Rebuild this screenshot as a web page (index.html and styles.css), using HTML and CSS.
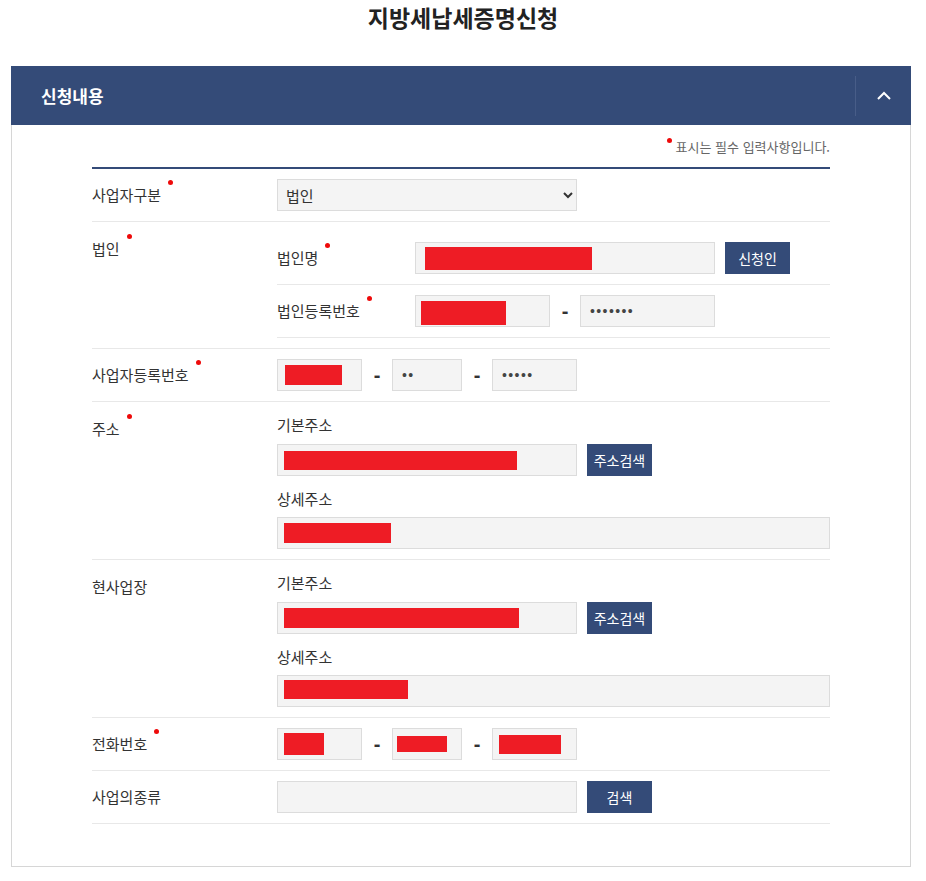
FILE: index.html
```html
<!DOCTYPE html>
<html lang="ko">
<head>
<meta charset="utf-8">
<title>지방세납세증명신청</title>
<link rel="stylesheet" href="styles.css">
</head>
<body>
<h1 class="page-title">지방세납세증명신청</h1>
<section class="panel">
  <div class="panel-head">
    <h2 class="panel-title">신청내용</h2>
    <button class="panel-toggle" type="button" aria-label="접기">
      <svg width="14" height="9" viewBox="0 0 14 9"><polyline points="1,8 7,2 13,8" fill="none" stroke="#fff" stroke-width="2"/></svg>
    </button>
  </div>
  <div class="panel-body">
    <p class="req-note"><span class="note-dot"></span>표시는 필수 입력사항입니다.</p>
    <div class="form">
      <div class="row">
        <div class="th">사업자구분<span class="req"></span></div>
        <div class="td">
          <select class="select"><option>법인</option></select>
        </div>
      </div>

      <div class="row row-multi">
        <div class="th">법인<span class="req"></span></div>
        <div class="td td-block">
          <div class="subrow">
            <div class="sub-th">법인명<span class="req"></span></div>
            <div class="field w300"><span class="mask m-corp-name"></span></div>
            <button class="btn" type="button">신청인</button>
          </div>
          <div class="subrow">
            <div class="sub-th">법인등록번호<span class="req"></span></div>
            <div class="field w135"><span class="mask m-corp-no"></span></div>
            <span class="dash">-</span>
            <div class="field w135"><span class="dots">•••••••</span></div>
          </div>
        </div>
      </div>

      <div class="row">
        <div class="th">사업자등록번호<span class="req"></span></div>
        <div class="td">
          <div class="field w85"><span class="mask m-biz"></span></div>
          <span class="dash">-</span>
          <div class="field w70"><span class="dots">••</span></div>
          <span class="dash">-</span>
          <div class="field w85"><span class="dots">•••••</span></div>
        </div>
      </div>

      <div class="row row-multi">
        <div class="th">주소<span class="req"></span></div>
        <div class="td td-block">
          <div class="addr-label">기본주소</div>
          <div class="field-group">
            <div class="field w300"><span class="mask m-addr1"></span></div>
            <button class="btn" type="button">주소검색</button>
          </div>
          <div class="addr-label addr-label-2">상세주소</div>
          <div class="field wfull"><span class="mask m-addr1-detail"></span></div>
        </div>
      </div>

      <div class="row row-multi">
        <div class="th">현사업장</div>
        <div class="td td-block">
          <div class="addr-label">기본주소</div>
          <div class="field-group">
            <div class="field w300"><span class="mask m-addr2"></span></div>
            <button class="btn" type="button">주소검색</button>
          </div>
          <div class="addr-label addr-label-2">상세주소</div>
          <div class="field wfull"><span class="mask m-addr2-detail"></span></div>
        </div>
      </div>

      <div class="row">
        <div class="th">전화번호<span class="req"></span></div>
        <div class="td">
          <div class="field w85"><span class="mask m-tel1"></span></div>
          <span class="dash">-</span>
          <div class="field w70"><span class="mask m-tel2"></span></div>
          <span class="dash">-</span>
          <div class="field w85"><span class="mask m-tel3"></span></div>
        </div>
      </div>

      <div class="row">
        <div class="th">사업의종류</div>
        <div class="td">
          <div class="field w300"></div>
          <button class="btn" type="button">검색</button>
        </div>
      </div>
    </div>
  </div>
</section>
</body>
</html>
```

FILE: styles.css
```css
* { box-sizing: border-box; }

body {
  margin: 0;
  background: #fff;
  font-family: "Noto Sans CJK KR", "Noto Sans", sans-serif;
  font-size: 15px;
  line-height: 20px;
  color: #333;
}

.page-title {
  margin: 0;
  text-align: center;
  font-size: 23px;
  font-weight: 700;
  line-height: 35px;
  color: #222;
}

.panel {
  margin: 31px 0 0 11px;
  width: 900px;
}

.panel-head {
  height: 59px;
  background: #344b78;
  display: flex;
  align-items: center;
  justify-content: space-between;
  padding-left: 30px;
}

.panel-title {
  margin: 0;
  font-size: 17px;
  font-weight: 700;
  color: #fff;
  line-height: 24px;
}

.panel-toggle {
  width: 56px;
  height: 40px;
  border: 0;
  border-left: 1px solid #485d88;
  background: transparent;
  padding: 0;
  display: flex;
  align-items: center;
  justify-content: center;
}

.panel-body {
  border: 1px solid #d6d6d6;
  border-top: 0;
  padding: 13px 80px 42px 80px;
}

.req-note {
  margin: 0 0 11px;
  text-align: right;
  font-size: 13px;
  line-height: 18px;
  color: #666;
}

.note-dot {
  display: inline-block;
  width: 5px;
  height: 5px;
  border-radius: 50%;
  background: #ee0a0a;
  vertical-align: top;
  margin: 0 4px 0 0;
}

.req {
  display: inline-block;
  width: 5px;
  height: 5px;
  border-radius: 50%;
  background: #ee0a0a;
  vertical-align: top;
  margin: -5px 0 0 7px;
}

.form {
  border-top: 2px solid #344b78;
}

.row {
  display: flex;
  align-items: center;
  padding: 10px 0;
  border-bottom: 1px solid #e8e8e8;
}

.row-multi {
  align-items: flex-start;
}

.th {
  width: 185px;
  flex: none;
  color: #333;
}

.row-multi > .th {
  padding-top: 7px;
}

.td {
  flex: 1;
  display: flex;
  align-items: center;
}

.td-block {
  display: block;
}

.subrow {
  display: flex;
  align-items: center;
  padding: 10px 0;
  border-bottom: 1px solid #e8e8e8;
}

.sub-th {
  width: 138px;
  flex: none;
}

.select {
  width: 300px;
  height: 32px;
  background: #f4f4f4;
  border: 1px solid #dcdcdc;
  border-radius: 0;
  font-family: "Noto Sans CJK KR", sans-serif;
  font-size: 15px;
  color: #333;
  padding: 0 4px;
}

.field {
  height: 32px;
  background: #f4f4f4;
  border: 1px solid #dcdcdc;
  display: flex;
  align-items: center;
  padding: 0 6px;
  flex: none;
}

.w300 { width: 300px; }
.w135 { width: 135px; }
.w85 { width: 85px; }
.w70 { width: 70px; }
.wfull { width: 100%; }

.field-group {
  display: flex;
  align-items: center;
}

.addr-label {
  padding-top: 3px;
  margin-bottom: 9px;
  line-height: 20px;
}

.addr-label-2 {
  padding-top: 0;
  margin-top: 13px;
  margin-bottom: 8px;
}

.btn {
  width: 65px;
  height: 32px;
  margin-left: 10px;
  border: 0;
  background: #344b78;
  color: #fff;
  font-family: "Noto Sans CJK KR", sans-serif;
  font-size: 14px;
  padding: 0;
  flex: none;
}

.dash {
  width: 30px;
  text-align: center;
  font-family: "Liberation Sans", sans-serif;
  font-weight: 700;
  font-size: 20px;
  color: #333;
  flex: none;
}

.dots {
  font-family: "Liberation Sans", sans-serif;
  font-size: 14px;
  letter-spacing: 1.4px;
  color: #444;
  margin-left: 3px;
}

.mask {
  display: block;
  background: #ee1c25;
  flex: none;
}

.m-corp-name { width: 167px; height: 23px; margin-left: 3px; }
.m-corp-no { width: 85px; height: 24px; margin-left: -1px; margin-top: 4px; }
.m-biz { width: 57px; height: 20px; margin-left: 1px; }
.m-addr1 { width: 233px; height: 19px; }
.m-addr1-detail { width: 107px; height: 20px; }
.m-addr2 { width: 235px; height: 20px; }
.m-addr2-detail { width: 124px; height: 19px; margin-top: -4px; }
.m-tel1 { width: 40px; height: 22px; }
.m-tel2 { width: 50px; height: 16px; margin-left: -2px; }
.m-tel3 { width: 62px; height: 19px; }
```
